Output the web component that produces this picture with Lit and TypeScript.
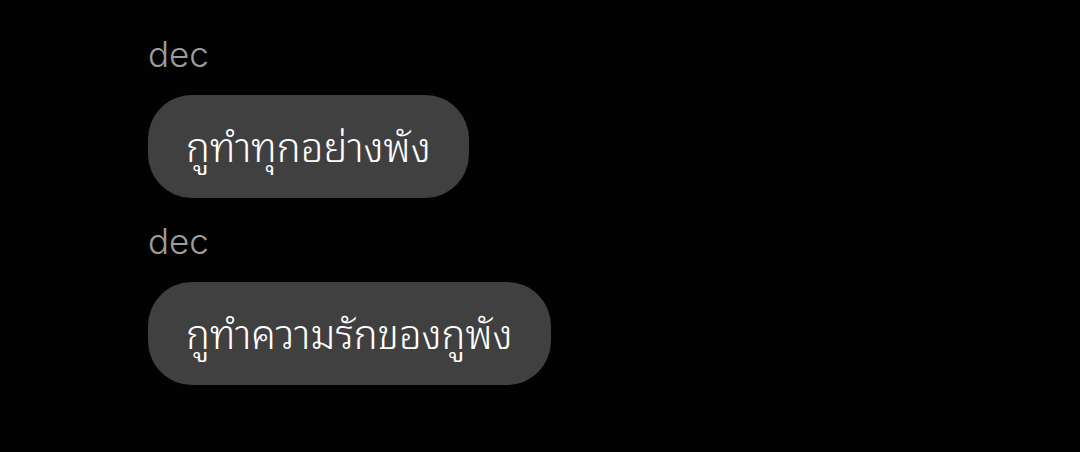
import { css, html, LitElement } from 'lit'
import { customElement, property } from 'lit/decorators.js'

interface Message {
  sender: string
  text: string
}

const messages: Message[] = [
  { sender: 'dec', text: 'กูทำทุกอย่างพัง' },
  { sender: 'dec', text: 'กูทำความรักของกูพัง' },
]

@customElement('x-message')
export class XMessage extends LitElement {
  static styles = css`
    :host {
      display: flex;
      flex-direction: column;
      align-items: flex-start;
    }

    .sender {
      color: #9c9c9c;
      font-size: 35px;
      font-weight: 300;
      line-height: 42px;
      margin-bottom: 20px;
    }

    .bubble {
      margin: 0;
      padding: 23px 38px 20px;
      border-radius: 44px;
      background: #404040;
      color: #fff;
      font-size: 40px;
      font-weight: 300;
      line-height: 60px;
    }
  `

  @property() sender = ''
  @property() text = ''

  render() {
    return html`
      <span class="sender">${this.sender}</span>
      <p class="bubble" lang="th">${this.text}</p>
    `
  }
}

@customElement('app-root')
export class AppRoot extends LitElement {
  static styles = css`
    :host {
      display: block;
      box-sizing: border-box;
      min-height: 100vh;
      padding: 33px 24px 24px 148px;
      background: #020202;
      font-family: Inter, 'Noto Sans Thai Looped', 'Noto Sans', sans-serif;
    }

    .thread {
      display: flex;
      flex-direction: column;
      gap: 22px;
    }
  `

  render() {
    return html`
      <main class="thread">
        ${messages.map(
          (m) => html`<x-message .sender=${m.sender} .text=${m.text}></x-message>`
        )}
      </main>
    `
  }
}
